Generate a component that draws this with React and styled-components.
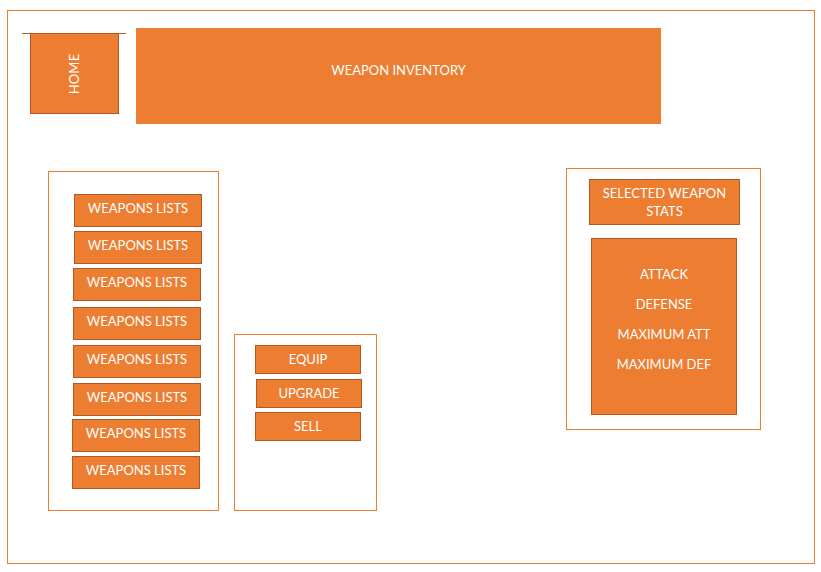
import React from 'react';
import styled, { createGlobalStyle } from 'styled-components';

const GlobalStyle = createGlobalStyle`
  html, body {
    margin: 0;
    padding: 0;
    background: #ffffff;
  }
  body {
    font-family: Lato, "Open Sans", "Liberation Sans", sans-serif;
  }
`;

const Page = styled.div`
  width: 821px;
  height: 572px;
  padding: 10px 0 0 7px;
  box-sizing: border-box;
`;

const Frame = styled.div`
  width: 808px;
  height: 554px;
  border: 1px solid #ed7d31;
  box-sizing: border-box;
`;

const HeaderRow = styled.div`
  display: flex;
  align-items: flex-start;
`;

const HomeHolder = styled.div`
  width: 104px;
  margin: 22px 0 0 14px;
  border-top: 1px solid #ae5a21;
  display: flex;
  justify-content: center;
`;

const HomeButton = styled.div`
  width: 89px;
  height: 81px;
  margin-top: -1px;
  background: #ed7d31;
  border: 1px solid #ae5a21;
  box-sizing: border-box;
  display: flex;
  align-items: center;
  justify-content: center;
`;

const HomeLabel = styled.span`
  transform: rotate(-90deg);
  color: #fff;
  font-size: 13px;
  letter-spacing: 0.2px;
`;

const Title = styled.div`
  width: 525px;
  height: 96px;
  margin: 17px 0 0 10px;
  background: #ed7d31;
  color: #fff;
  font-size: 13px;
  display: flex;
  align-items: center;
  justify-content: center;
  padding-bottom: 12px;
  box-sizing: border-box;
`;

const ContentRow = styled.div`
  display: flex;
  align-items: flex-start;
  margin-top: 44px;
  padding-left: ${p => p.$left}px;
`;

const Panel = styled.div`
  width: ${p => p.$w}px;
  height: ${p => p.$h}px;
  margin-top: ${p => p.$top}px;
  margin-left: ${p => p.$gap}px;
  border: 1px solid #ed7d31;
  box-sizing: border-box;
  display: flex;
  flex-direction: column;
  align-items: flex-start;
`;

const Block = styled.div`
  width: ${p => p.$w}px;
  height: ${p => p.$h}px;
  margin-top: ${p => p.$top}px;
  margin-left: ${p => p.$x}px;
  background: #ed7d31;
  border: 1px solid #ae5a21;
  box-sizing: border-box;
  color: #fff;
  font-size: 13px;
  line-height: 18px;
  text-align: center;
  padding-top: ${p => p.$pad}px;
`;

const StatLine = styled.div`
  height: 30px;
`;

const weaponButtons = [
  { x: 25, top: 22 },
  { x: 25, top: 4 },
  { x: 24, top: 4 },
  { x: 24, top: 6 },
  { x: 24, top: 5 },
  { x: 24, top: 5 },
  { x: 23, top: 3 },
  { x: 23, top: 4 },
];

const actions = [
  { label: 'EQUIP', x: 20, top: 10 },
  { label: 'UPGRADE', x: 21, top: 5 },
  { label: 'SELL', x: 20, top: 4 },
];

const stats = ['ATTACK', 'DEFENSE', 'MAXIMUM ATT', 'MAXIMUM DEF'];

function App() {
  return (
    <>
      <GlobalStyle />
      <Page>
        <Frame>
          <HeaderRow>
            <HomeHolder>
              <HomeButton>
                <HomeLabel>HOME</HomeLabel>
              </HomeButton>
            </HomeHolder>
            <Title>WEAPON INVENTORY</Title>
          </HeaderRow>

          <ContentRow $left={40}>
            <Panel $w={171} $h={340} $top={3} $gap={0}>
              {weaponButtons.map((b, i) => (
                <Block key={i} $w={128} $h={33} $x={b.x} $top={b.top} $pad={4}>
                  WEAPONS LISTS
                </Block>
              ))}
            </Panel>

            <Panel $w={143} $h={177} $top={166} $gap={15}>
              {actions.map(a => (
                <Block key={a.label} $w={106} $h={29} $x={a.x} $top={a.top} $pad={4}>
                  {a.label}
                </Block>
              ))}
            </Panel>

            <Panel $w={195} $h={262} $top={0} $gap={189}>
              <Block $w={151} $h={46} $x={22} $top={10} $pad={4}>
                SELECTED WEAPON<br />STATS
              </Block>
              <Block $w={146} $h={177} $x={24} $top={13} $pad={26}>
                {stats.map(s => (
                  <StatLine key={s}>{s}</StatLine>
                ))}
              </Block>
            </Panel>
          </ContentRow>
        </Frame>
      </Page>
    </>
  );
}

export default App;
